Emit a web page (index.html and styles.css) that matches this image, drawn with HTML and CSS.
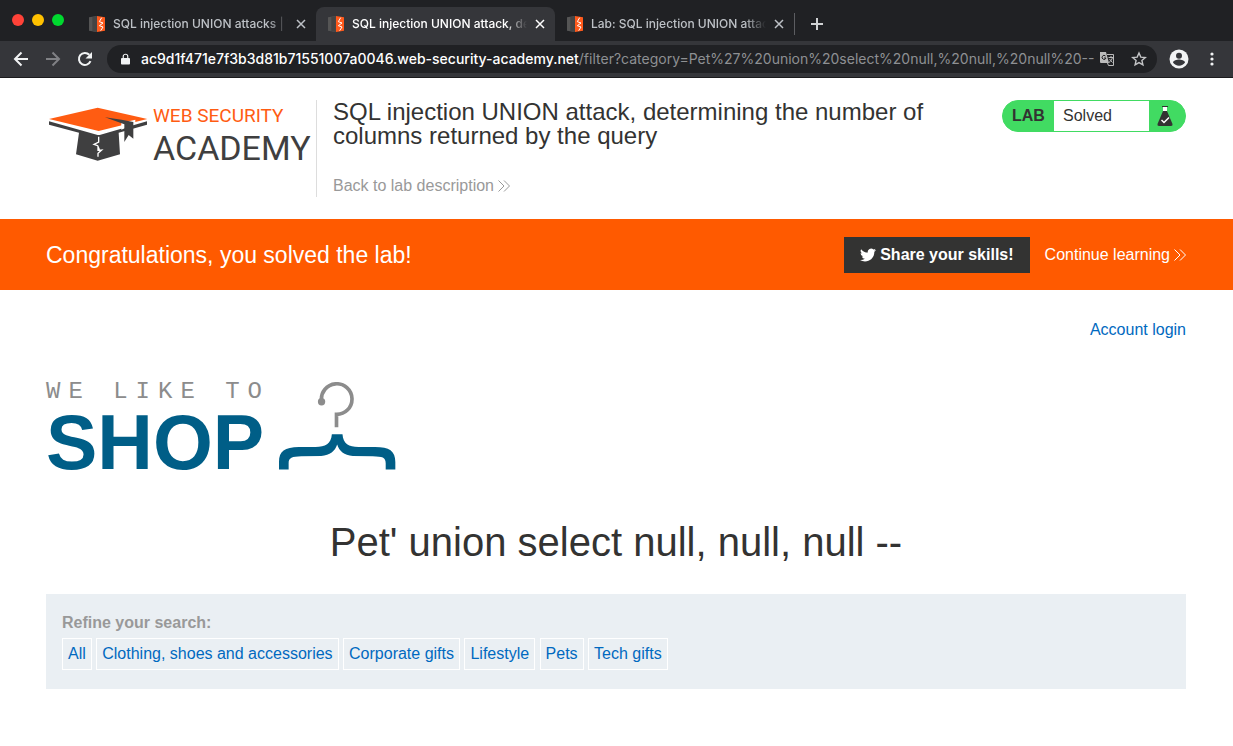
FILE: index.html
```html
<!DOCTYPE html>
<html lang="en">
<head>
<meta charset="utf-8">
<title>SQL injection UNION attack</title>
<link rel="stylesheet" href="styles.css">
</head>
<body>
<svg class="defs" aria-hidden="true">
  <symbol id="favicon" viewBox="0 0 48 48">
    <path fill="#555" d="M0 4 23 0v48L0 44z"/><path fill="#444" d="M10 3 23 1v47l-13-3z"/>
    <path fill="#ff5a1c" d="M24 0 48 4v40l-24 4z"/>
    <path fill="none" stroke="#fff" stroke-width="3" d="M38 5 31 17l11 4-11 8 11 4-7 11"/>
  </symbol>
  <symbol id="close" viewBox="0 0 10 10"><path fill="none" stroke="currentColor" stroke-width="1.5" d="m1 1 8 8M9 1 1 9"/></symbol>
  <symbol id="chevrons" viewBox="0 0 12 12"><path fill="none" stroke="currentColor" d="m.5.5 5.500 5.500-5.500 5.500M6 .5l5.500 5.500L6 11.500"/></symbol>
</svg>

<div class="browser">
  <div class="tabstrip">
    <div class="lights"><span class="light red"></span><span class="light yellow"></span><span class="light green"></span></div>
    <div class="tab">
      <svg class="favicon"><use href="#favicon"/></svg>
      <span class="tab-title">SQL injection UNION attacks | Web</span>
      <button class="tab-close" aria-label="Close tab"><svg><use href="#close"/></svg></button>
    </div>
    <div class="tab active">
      <svg class="favicon"><use href="#favicon"/></svg>
      <span class="tab-title">SQL injection UNION attack, determining</span>
      <button class="tab-close" aria-label="Close tab"><svg><use href="#close"/></svg></button>
    </div>
    <div class="tab last">
      <svg class="favicon"><use href="#favicon"/></svg>
      <span class="tab-title">Lab: SQL injection UNION attack, det</span>
      <button class="tab-close" aria-label="Close tab"><svg><use href="#close"/></svg></button>
    </div>
    <button class="new-tab" aria-label="New tab"><svg viewBox="0 0 12 12"><path stroke="currentColor" stroke-width="2" d="M6 0v12M0 6h12"/></svg></button>
  </div>
  <div class="toolbar">
    <button class="tool" aria-label="Back"><svg viewBox="0 0 16 16"><path fill="none" stroke="currentColor" stroke-width="2" d="M15 8H2M8.500 1.500 2 8l6.500 6.500"/></svg></button>
    <button class="tool dim" aria-label="Forward"><svg viewBox="0 0 16 16"><path fill="none" stroke="currentColor" stroke-width="2" d="M1 8h13M7.500 1.500 14 8l-6.500 6.500"/></svg></button>
    <button class="tool" aria-label="Reload"><svg viewBox="0 0 16 16"><path fill="none" stroke="currentColor" stroke-width="2" d="M13.500 10.200A6 6 0 1 1 12.300 3.800"/><path fill="currentColor" d="M15 1v6.500H8.500z"/></svg></button>
    <div class="address">
      <svg class="lock" viewBox="0 0 10 12"><path fill="currentColor" d="M1 5h8a1 1 0 0 1 1 1v5a1 1 0 0 1-1 1H1a1 1 0 0 1-1-1V6a1 1 0 0 1 1-1z"/><path fill="none" stroke="currentColor" stroke-width="1.300" d="M2.500 5.500V3a2.500 2.300 0 0 1 5 0v2.500"/></svg>
      <span class="url"><b>ac9d1f471e7f3b3d81b71551007a0046.web-security-academy.net</b>/filter?category=Pet%27%20union%20select%20null,%20null,%20null%20--</span>
      <button class="addr-btn" aria-label="Translate this page"><svg viewBox="0 0 16 16"><path fill="#bbb" d="M1 1h6l3 11H2a1 1 0 0 1-1-1z"/><path fill="none" stroke="#bbb" d="M8 3.500h6.500v11H9.500L8.500 12M9.500 6.500h5M12 5v1.500M13.500 6.500c-.5 2-2 4-3.500 5M10.500 8c1 1.500 2 2.500 3 3.500"/><path fill="none" stroke="#202124" d="M6.500 5A2 2 0 1 0 7 7H5"/></svg></button>
      <button class="addr-btn" aria-label="Bookmark this tab"><svg viewBox="0 0 16 16"><path fill="none" stroke="#c4c5c7" stroke-width="1.400" d="m8 2 1.800 4.100 4.500.4-3.400 3 1 4.400L8 11.600l-3.900 2.300 1-4.400-3.400-3 4.500-.4z"/></svg></button>
    </div>
    <button class="profile" aria-label="Profile"><svg viewBox="0 0 20 20"><circle cx="10" cy="10" r="9.500" fill="#f1f3f4"/><circle cx="10" cy="6.700" r="3" fill="#35363a"/><path fill="#35363a" d="M4 13.600c0-2 4-3 6-3s6 1 6 3c-1.200 1.900-3.500 3.200-6 3.200s-4.800-1.300-6-3.200z"/></svg></button>
    <button class="menu" aria-label="Menu"><svg viewBox="0 0 4 14"><g fill="#f1f3f4"><circle cx="2" cy="2" r="1.600"/><circle cx="2" cy="7" r="1.600"/><circle cx="2" cy="12" r="1.600"/></g></svg></button>
  </div>
</div>

<header class="lab-header container">
  <a class="academy" href="#" aria-label="Web Security Academy">
    <svg class="cap" viewBox="24 52 300 165">
      <path fill="#ff5c12" d="m27 88 146-34 149 34-146 36z"/>
      <path fill="#3f3f40" d="m27 95 146 41 6 0 142-41v10l-85 24 4 65-67 19-65-19 9-65-90-24z"/>
      <path fill="#fff" d="m244 100 42-10v12l-42 18z"/>
      <path fill="#3f3f40" d="m195 83 50 7 35 7v50l-14-11-13 21v-53z"/>
      <path fill="none" stroke="#fff" stroke-width="4" d="M176 141v16l-14 7 11 4 4 9v6M174 169v13l11-1-11 10v10"/>
    </svg>
    <span class="academy-name"><span class="web-security">WEB SECURITY</span><span class="academy-word">ACADEMY</span></span>
  </a>
  <div class="lab-title">
    <h2>SQL injection UNION attack, determining the number of columns returned by the query</h2>
    <a class="back" href="#">Back to lab description <svg class="chevrons"><use href="#chevrons"/></svg></a>
  </div>
  <div class="lab-status">
    <span class="lab-tag">LAB</span>
    <span class="lab-state">Solved</span>
    <span class="lab-flask"><svg viewBox="0 0 18 21"><path fill="#fff" d="M7 1h4v5H7z"/><path fill="#333332" d="M6 0h6v1H6zM7 5h4l5.500 13q.5 2-1.500 2H3q-2 0-1.500-2z"/><path fill="none" stroke="#fff" stroke-width="1.500" d="m5.500 14 2.500 2.500 5-5"/></svg></span>
  </div>
</header>

<section class="banner">
  <div class="container banner-row">
    <h4>Congratulations, you solved the lab!</h4>
    <button class="share"><svg viewBox="0 0 24 24"><path fill="#fff" d="M24 4.600a10 10 0 0 1-2.800.8 5 5 0 0 0 2.100-2.700 10 10 0 0 1-3.100 1.200 4.900 4.900 0 0 0-8.400 4.500A14 14 0 0 1 1.700 3.200a4.900 4.900 0 0 0 1.500 6.500 5 5 0 0 1-2.200-.6v.1a4.900 4.900 0 0 0 3.900 4.800 5 5 0 0 1-2.200.1 4.900 4.900 0 0 0 4.600 3.400A10 10 0 0 1 0 19.500a14 14 0 0 0 7.500 2.200c9.100 0 14.300-7.700 14-14.600A10 10 0 0 0 24 4.600z"/></svg>Share your skills!</button>
    <a class="continue" href="#">Continue learning <svg class="chevrons"><use href="#chevrons"/></svg></a>
  </div>
</section>

<main class="container">
  <nav class="account"><a href="#">Account login</a></nav>
  <div class="shop-logo">
    <div class="shop-words"><span class="we-like">WE LIKE TO</span><span class="shop">SHOP</span></div>
    <svg class="hanger" viewBox="748 36 352 264"><path fill="none" stroke="#8c8c8c" stroke-width="11" d="M876 93A46 46 0 1 1 921 133V172"/><circle cx="876" cy="95" r="11" fill="#8c8c8c"/><path fill="#005e87" d="M907 193h32c2 29 19 38 48 38h50c43 0 61 12 61 45v23h-29v-19c0-18-10-20-39-21l-60-1c-26-2-41-14-47-34-6 20-22 32-48 34l-60 1c-28 1-38 4-38 21v19h-29v-23c0-33 17-44 60-45h50c29 0 47-9 49-38z"/></svg>
  </div>
  <h1>Pet' union select null, null, null --</h1>
  <section class="filters">
    <strong>Refine your search:</strong>
    <div class="filter-list">
      <a href="#">All</a>
      <a href="#">Clothing, shoes and accessories</a>
      <a href="#">Corporate gifts</a>
      <a href="#">Lifestyle</a>
      <a href="#">Pets</a>
      <a href="#">Tech gifts</a>
    </div>
  </section>
</main>
</body>
</html>
```
FILE: styles.css
```css
* { box-sizing: border-box; }
body { margin: 0; background: #fff; color: #333332; font: 16px/20px "Liberation Sans", Arial, sans-serif; }
a { color: #0069c0; text-decoration: none; }
button { border: 0; padding: 0; background: none; color: inherit; font: inherit; cursor: pointer; }
svg { display: block; flex: none; }
h1, h2, h4 { margin: 0; font-weight: 400; }
.defs { position: absolute; width: 0; height: 0; }

/* Browser window */
.browser { font-family: Inter, sans-serif; color: #f1f3f4; background: #202124; border-bottom: 1px solid #1b1b1d; }
.tabstrip { display: flex; height: 41px; padding-top: 7px; }
.lights { display: flex; gap: 8px; width: 77px; padding: 7px 0 0 12px; }
.light { width: 12px; height: 12px; border-radius: 50%; }
.red { background: #ff4238; }
.yellow { background: #ffc100; }
.green { background: #00d92f; }
.tab { display: flex; align-items: center; gap: 8px; width: 239px; padding: 0 10px 0 12px; color: #bdc1c6; font-size: 12px; }
.tab.active { background: #35363a; border-radius: 8px 8px 0 0; color: #fff; }
.tab.last { width: 240px; border-right: 1px solid transparent; border-image: linear-gradient(transparent 7px, #5c5d61 7px, #5c5d61 27px, transparent 27px) 1; }
.favicon { width: 16px; height: 16px; }
.tab-title { flex: 1; overflow: hidden; white-space: nowrap; font-weight: 500; -webkit-mask-image: linear-gradient(90deg, #000 88%, transparent); mask-image: linear-gradient(90deg, #000 88%, transparent); }
.tab-close svg { width: 10px; height: 10px; }
.new-tab { padding: 0 16px; color: #d0d2d4; }
.new-tab svg { width: 12px; height: 12px; }
.toolbar { display: flex; align-items: center; height: 36px; padding: 0 19px 0 13px; background: #35363a; }
.tool { width: 32px; }
.tool svg { width: 16px; height: 16px; }
.tool.dim { color: #808185; }
.address { display: flex; flex: 1; align-items: center; height: 28px; margin-right: 12px; margin-left: -2px; padding: 0 10px 0 14px; border-radius: 14px; background: #202124; }
.lock { width: 9px; height: 12px; }
.url { flex: 1; overflow: hidden; margin-left: 11px; white-space: nowrap; font-size: 14px; color: #8e9093; }
.url b { font-weight: 500; color: #fff; }
.addr-btn { margin-left: 16px; }
.addr-btn:first-of-type { margin-left: 4px; }
.addr-btn svg { width: 16px; height: 16px; }
.profile svg { width: 20px; height: 20px; }
.menu { margin-left: 21px; }
.menu svg { width: 4px; height: 14px; }

/* Lab header */
.container { max-width: 1233px; margin: 0 auto; padding: 0 47px 0 46px; }
.lab-header { display: flex; align-items: flex-start; padding-top: 22px; padding-bottom: 22px; }
.academy { display: flex; gap: 5px; width: 271px; height: 97px; padding: 7px 0 0 2px; border-right: 1px solid #ddd; }
.cap { width: 100px; height: 55px; }
.academy-name { display: flex; flex-direction: column; gap: 2px; font-family: Roboto, sans-serif; white-space: nowrap; }
.web-security { color: #ff5c12; font-size: 19px; line-height: 18px; }
.academy-word { color: #3f3f40; font-size: 34px; line-height: 42px; }
.lab-title { flex: 1; padding: 0 16px; }
.lab-title h2 { font-size: 24px; line-height: 24px; }
.back { display: flex; align-items: center; gap: 4px; margin-top: 28px; color: #999; }
.chevrons { width: 12px; height: 12px; }
.lab-status { display: flex; width: 184px; height: 32px; border: 1px solid #41db62; border-radius: 16px; background: #41db62; overflow: hidden; line-height: 30px; }
.lab-tag { width: 51px; padding-left: 9px; font-weight: 700; }
.lab-state { flex: 1; padding-left: 9px; background: #fff; }
.lab-flask { width: 36px; padding: 5px 0 0 7px; }
.lab-flask svg { width: 18px; height: 21px; }

/* Solved banner */
.banner { background: #ff5a00; color: #fff; }
.banner-row { display: flex; align-items: center; height: 71px; }
.banner h4 { flex: 1; font-size: 23px; line-height: 28px; }
.share { display: flex; align-items: center; gap: 4px; height: 36px; padding: 0 16px; background: #333332; font-weight: 700; }
.share svg { width: 16px; height: 16px; }
.continue { display: flex; align-items: center; gap: 4px; margin-left: 15px; color: #fff; }

/* Shop */
.account { display: flex; justify-content: flex-end; padding-top: 30px; }
.shop-logo { display: flex; gap: 17px; margin-top: 42px; }
.shop-words { display: flex; flex-direction: column; width: 216px; white-space: nowrap; }
.we-like { color: #8c8c8c; font: 24px/20px "Liberation Mono", monospace; letter-spacing: 8px; }
.shop { color: #005e87; font-size: 77px; font-weight: 700; line-height: 80px; }
.hanger { width: 117px; height: 88px; }
h1 { margin-top: 38px; font-size: 40px; line-height: 44px; text-align: center; }
.filters { margin-top: 30px; padding: 19px 16px; background: #eaeff3; }
.filters strong { display: block; color: #999; }
.filter-list { margin-top: 5px; }
.filter-list a { display: inline-block; padding: 5px; border: 1px solid #fff; }
```
